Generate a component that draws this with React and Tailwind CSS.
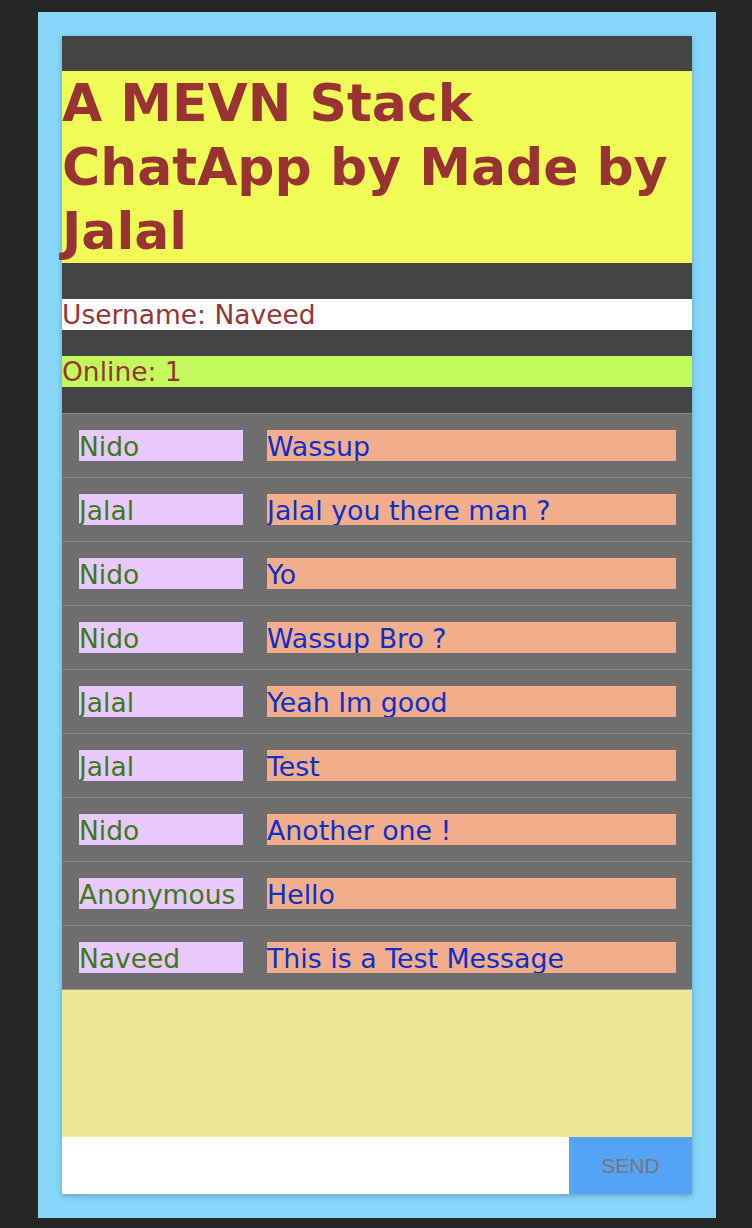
const messages = [
  { name: "Nido", text: "Wassup" },
  { name: "Jalal", text: "Jalal you there man ?" },
  { name: "Nido", text: "Yo" },
  { name: "Nido", text: "Wassup Bro ?" },
  { name: "Jalal", text: "Yeah Im good" },
  { name: "Jalal", text: "Test" },
  { name: "Nido", text: "Another one !" },
  { name: "Anonymous", text: "Hello" },
  { name: "Naveed", text: "This is a Test Message" },
];

export default function App() {
  return (
    <div className="min-h-[1228px] bg-[#262626] pt-3 pl-[38px] pr-9 pb-[9px] font-['DejaVu_Sans',Verdana,sans-serif]">
      <div className="bg-[#87d7fb] px-6 py-6">
        <div className="bg-[#444444] shadow-[0_2px_6px_rgba(0,0,0,0.25)]">
          <div className="h-[35px]" />
          <h1 className="bg-[#f1fb56] text-[#993333] font-bold text-[52px] leading-[64px] h-[192px]">
            A MEVN Stack ChatApp by Made by Jalal
          </h1>
          <div className="h-9" />
          <div className="bg-white text-[#993333] text-[26.5px] leading-[31px] h-[31px]">Username: Naveed</div>
          <div className="h-[26px]" />
          <div className="bg-[#c2fa5c] text-[#993333] text-[26.5px] leading-[31px] h-[31px]">Online: 1</div>
          <div className="h-[26px]" />
          <ul className="bg-[#6e6e6e]">
            {messages.map((m, i) => (
              <li key={i} className="flex items-center h-16 pl-[17px] pr-4 gap-6 border-t border-[#878787]">
                <span className="w-[164px] h-[31px] leading-[33px] bg-[#e9c9fb] text-[#3a7a1a] text-[26.5px] whitespace-nowrap overflow-hidden">
                  {m.name}
                </span>
                <span className="flex-1 h-[31px] leading-[33px] bg-[#f2ae8c] text-[#0b30c8] text-[26.8px] whitespace-nowrap overflow-hidden">
                  {m.text}
                </span>
              </li>
            ))}
          </ul>
          <div className="h-[148px] bg-[#eee596] border-t border-[#999]" />
          <div className="flex h-[57px]">
            <input className="flex-1 bg-white outline-none px-2" />
            <button className="w-[123px] bg-[#55a3f5] text-[#777] text-[21px] font-['Liberation_Sans',Arial,sans-serif]">
              SEND
            </button>
          </div>
        </div>
      </div>
    </div>
  );
}
